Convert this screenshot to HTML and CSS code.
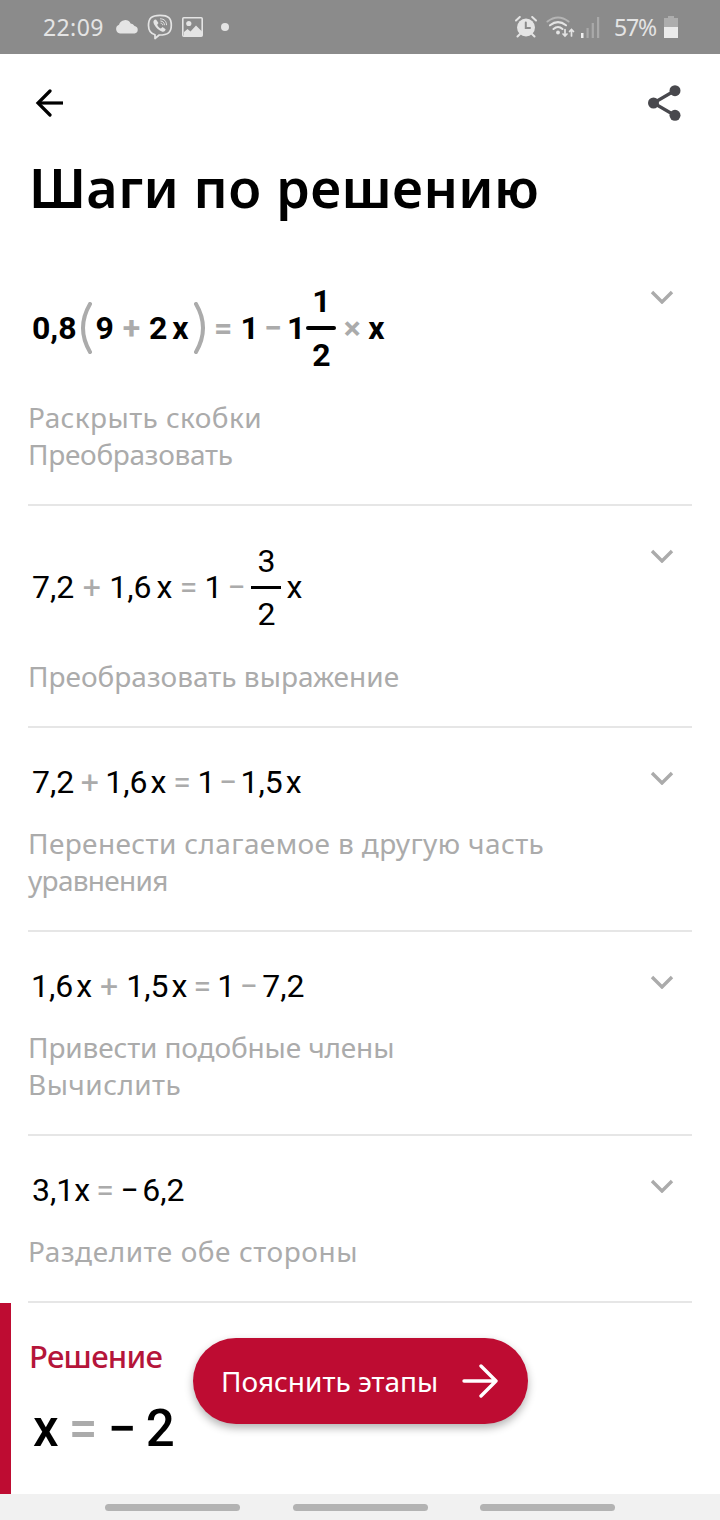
FILE: index.html
```html
<!DOCTYPE html>
<html lang="ru">
<head>
    <meta charset="UTF-8">
    <meta name="viewport" content="width=device-width, initial-scale=1.0">
    <title>Шаги по решению</title>
    <link rel="stylesheet" href="styles.css">
</head>
<body>
    <div class="status">
        <span class="clock">22:09</span>
        <svg class="cloud" width="24" height="14" viewBox="0 0 24 14"><path d="M5 13.5A4.6 4.6 0 0 1 4 4.7 6.3 6.3 0 0 1 15.6 3.4 4.8 4.8 0 0 1 19.5 6 3.8 3.8 0 0 1 19.6 13.5Z" fill="#e4e4e4"/></svg>
        <svg class="viber" width="26" height="26" viewBox="0 0 26 26" fill="none" stroke="#e4e4e4" stroke-linecap="round">
            <path d="M8 24.5V20.8C3.5 19.5 1.5 17 1.5 11.5 1.5 4 4.5 1.3 13 1.3S24.3 4 24.3 11.2 21 21 12.2 21Z" stroke-width="1.7" stroke-linejoin="round"/>
            <path d="M7.5 5.8C6 7 6.2 8.5 7.2 10.4c2 3.7 4.6 5.8 8.2 7.3 1.6.6 3.3-1.5 3.2-2.5L15.6 13l-1.7 1.5c-1.7-.6-3.1-2-3.7-3.8L11.5 9 9 5.6Z" fill="#e4e4e4" stroke="none"/>
            <path d="M13.5 4.8c3.8 0 6 2.5 6 6M13.8 7c2.2.2 3.6 1.7 3.6 3.8M14 9.2c1 .1 1.5.6 1.6 1.6" stroke-width="1"/>
        </svg>
        <svg class="photo" width="21" height="20" viewBox="0 0 21 20"><rect x=".8" y=".8" width="19.4" height="18.4" rx="1" fill="none" stroke="#e4e4e4" stroke-width="1.6"/><circle cx="6.8" cy="6.5" r="2.6" fill="#e4e4e4"/><path d="M2 15l3.5-3 3 2.5L14 8.5l6 6V19H2Z" fill="#e4e4e4"/></svg>
        <span class="dot"></span>
        <div class="status-right">
            <svg width="22" height="22" viewBox="0 0 22 22" stroke="#e4e4e4" stroke-linecap="round">
                <circle cx="11" cy="11.5" r="9" fill="#e4e4e4" stroke="none"/>
                <path d="M1 4.5 4.8 1M21 4.5 17.2 1M5 18l-2.5 2.5M17 18l2.5 2.5" stroke-width="2" fill="none"/>
                <path d="M10.8 6.5V12H15" stroke="#8b8b8b" stroke-width="2" fill="none"/>
            </svg>
            <svg class="wifi" width="29" height="22" viewBox="0 0 29 22" fill="none" stroke="#e4e4e4" stroke-width="2.1" stroke-linecap="round">
                <path d="M1.5 5.5Q12 -2.5 22.5 5.5" stroke="#b4b4b4"/>
                <path d="M4 9.3Q12 3 20 9.3M7.5 13Q12 9 16.5 13"/>
                <circle cx="12" cy="16.5" r="1.9" fill="#e4e4e4" stroke="none"/>
                <path d="M19 13.5v6.5M17 18l2 2 2-2M25.5 20v-6.5M23.5 15.5l2-2 2 2" stroke-width="1.7"/>
            </svg>
            <svg class="signal" width="19" height="21" viewBox="0 0 19 21"><path d="M0 16h2.5v5H0Z" fill="#f0f0f0"/><path d="M5.5 11h2.2v10H5.5ZM10.7 6h2.2v15h-2.2ZM16 0h2.2v21H16Z" fill="#a9a9a9"/></svg>
            <span class="percent">57%</span>
            <svg class="battery" width="14" height="22" viewBox="0 0 14 22"><path d="M4 0h6v2h4v9H0V2h4Z" fill="#adadad"/><path d="M0 11h14v11H0Z" fill="#ebebeb"/></svg>
        </div>
    </div>

    <div class="toolbar">
        <svg width="30" height="28" viewBox="0 0 30 28" fill="none" stroke="#000" stroke-width="3.2" stroke-linecap="round"><path d="M15 2 3 14l12 12"/><path d="M3 14h25" stroke-linecap="butt"/></svg>
        <svg width="33" height="36" viewBox="0 0 33 36" fill="#48484d"><path d="M27 5.5 5.5 18 27 30.5" fill="none" stroke="#48484d" stroke-width="3.2"/><circle cx="5.5" cy="18" r="5.5"/><circle cx="27" cy="5.7" r="5.5"/><circle cx="27" cy="30.3" r="5.5"/></svg>
    </div>
    <h1 class="title">Шаги по решению</h1>

    <div class="steps">
        <div class="step">
            <div class="step-body">
                <div class="eq eq-tall eq-bold">
                    <span>0,8</span>
                    <svg class="paren" width="12" height="52" viewBox="0 0 12 52"><path d="M10 2Q-4 26 10 50"/></svg>
                    <span class="nine">9</span><span class="op w35">+</span><span>2</span><span class="var">x</span>
                    <svg class="paren close" width="12" height="52" viewBox="0 0 12 52"><path d="M2 2Q16 26 2 50"/></svg>
                    <span class="op w35">=</span><span>1</span><span class="op w28">−</span><span>1</span>
                    <span class="frac"><span>1</span><span class="bar"></span><span>2</span></span>
                    <span class="op w32">×</span><span>x</span>
                </div>
                <p class="note n1">Раскрыть скобки<br><span class="n1b">Преобразовать</span></p>
            </div>
            <svg class="chevron" width="24" height="14" viewBox="0 0 24 14"><path d="M2 2l10 10L22 2"/></svg>
        </div>

        <div class="step">
            <div class="step-body">
                <div class="eq eq-tall">
                    <span>7,2</span><span class="op w35">+</span><span>1,6</span><span class="var">x</span><span class="op w32">=</span><span>1</span><span class="op w28">−</span>
                    <span class="frac"><span>3</span><span class="bar"></span><span>2</span></span>
                    <span class="var">x</span>
                </div>
                <p class="note n2">Преобразовать выражение</p>
            </div>
            <svg class="chevron" width="24" height="14" viewBox="0 0 24 14"><path d="M2 2l10 10L22 2"/></svg>
        </div>

        <div class="step">
            <div class="step-body">
                <div class="eq eq-short">
                    <span>7,2</span><span class="op w31">+</span><span>1,6</span><span class="var">x</span><span class="op w31">=</span><span>1</span><span class="op w25">−</span><span>1,5</span><span class="var">x</span>
                </div>
                <p class="note n3">Перенести слагаемое в другую часть<br><span class="n3b">уравнения</span></p>
            </div>
            <svg class="chevron" width="24" height="14" viewBox="0 0 24 14"><path d="M2 2l10 10L22 2"/></svg>
        </div>

        <div class="step">
            <div class="step-body">
                <div class="eq eq-short eq-one">
                    <span>1,6</span><span class="var">x</span><span class="op w34">+</span><span>1,5</span><span class="var">x</span><span class="op w30">=</span><span>1</span><span class="op w27">−</span><span>7,2</span>
                </div>
                <p class="note n4">Привести подобные члены<br><span class="n4b">Вычислить</span></p>
            </div>
            <svg class="chevron" width="24" height="14" viewBox="0 0 24 14"><path d="M2 2l10 10L22 2"/></svg>
        </div>

        <div class="step">
            <div class="step-body">
                <div class="eq">
                    <span>3,1x</span><span class="op w30">=</span><span class="neg">−</span><span>6,2</span>
                </div>
                <p class="note n5">Разделите обе стороны</p>
            </div>
            <svg class="chevron" width="24" height="14" viewBox="0 0 24 14"><path d="M2 2l10 10L22 2"/></svg>
        </div>
    </div>

    <div class="solution">
        <div class="solution-title">Решение</div>
        <div class="answer"><span>x</span><span class="op">=</span><span class="neg">−</span><span>2</span></div>
    </div>

    <!-- плавающая кнопка -->
    <button class="explain" type="button">
        <span>Пояснить этапы</span>
        <svg width="36" height="34" viewBox="0 0 36 34" fill="none" stroke="#fff" stroke-width="3.4" stroke-linecap="round" stroke-linejoin="round"><path d="M2 17h32M19 2l15 15-15 15"/></svg>
    </button>

    <div class="navbar"><span></span><span></span><span></span></div>
</body>
</html>
```
FILE: styles.css
```css
body {
    margin: 0;
    width: 720px;
    height: 1520px;
    display: flex;
    flex-direction: column;
    position: relative;
    overflow: hidden;
    background-color: #fff;
    font-family: "Noto Sans", sans-serif;
    color: #000;
}
svg {
    display: block;
    flex: none;
}

/* строка состояния */
.status {
    height: 54px;
    box-sizing: border-box;
    padding: 0 42px 0 43px;
    display: flex;
    align-items: center;
    background-color: #8b8b8b;
    color: #e4e4e4;
    font-size: 23px;
}
.clock {
    width: 72px;
    letter-spacing: 0.4px;
}
.viber {
    margin-left: 8px;
}
.photo {
    margin-left: 9px;
}
.dot {
    width: 8px;
    height: 8px;
    margin-left: 18px;
    border-radius: 50%;
    background-color: #e4e4e4;
}
.status-right {
    margin-left: auto;
    display: flex;
    align-items: center;
}
.wifi {
    margin-left: 9px;
}
.signal {
    margin-left: 6px;
}
.percent {
    width: 50px;
    margin-left: 14px;
    letter-spacing: -1.2px;
}

.toolbar {
    height: 98px;
    padding: 0 39px 0 35px;
    display: flex;
    align-items: center;
    justify-content: space-between;
}
.title {
    margin: 0 0 0 29px;
    height: 95px;
    line-height: 70px;
    font-size: 54px;
    font-weight: 600;
    letter-spacing: 0.4px;
    white-space: nowrap;
}

/* шаги */
.steps {
    margin: 0 28px;
}
.step {
    display: flex;
    justify-content: space-between;
    padding: 32px 18px 31px 0;
    border-bottom: 2px solid #e6e6e6;
}
.chevron {
    margin-top: 11px;
    fill: none;
    stroke: #ababab;
    stroke-width: 3.4;
}
.eq {
    height: 43px;
    padding-left: 4px;
    display: flex;
    align-items: center;
    font: 32px/40px Roboto, sans-serif;
    white-space: nowrap;
}
.eq-one {
    padding-left: 3px;
}
.eq-tall {
    height: 98px;
}
.eq-bold {
    font-weight: 700;
}
.op {
    text-align: center;
    color: #ababab;
}
.w25 { width: 25px; }
.w27 { width: 27px; }
.w28 { width: 28px; }
.w30 { width: 30px; }
.w31 { width: 31px; }
.w32 { width: 32px; }
.w34 { width: 34px; }
.w35 { width: 35px; }
.var {
    margin-left: 5px;
}
.eq-short .var {
    margin-left: 3px;
}
.neg {
    width: 22px;
    text-align: left;
}
.paren {
    margin-left: 3px;
    fill: none;
    stroke: #ababab;
    stroke-width: 4;
    stroke-linecap: round;
}
.close {
    margin-left: 5px;
}
.nine {
    margin-left: 4px;
}
.frac {
    width: 30px;
    margin-left: 1px;
    display: flex;
    flex-direction: column;
    align-items: center;
    gap: 5px;
}
.bar {
    width: 100%;
    height: 3px;
    background-color: #000;
}
.eq-bold .bar {
    height: 4px;
    border-radius: 2px;
}
.note {
    margin: 22px 0 0;
    font-size: 28px;
    line-height: 37px;
    color: #ababab;
    white-space: nowrap;
}
.n1 { letter-spacing: 0.4px; }
.n1b { letter-spacing: -0.3px; }
.n3 { letter-spacing: 0.38px; }
.n3b { letter-spacing: -0.7px; }
.n4 { letter-spacing: -0.13px; }
.n4b { letter-spacing: 0.45px; }
.n5 { letter-spacing: 0.55px; }

/* решение */
.solution {
    flex: 1;
    padding: 30px 0 0 18px;
    border-left: 11px solid #be0c32;
}
.solution-title {
    font-size: 31px;
    line-height: 46px;
    font-weight: 500;
    letter-spacing: -0.7px;
    color: #b5153a;
}
.answer {
    margin-left: 4px;
    display: flex;
    font: 500 51px/100px Roboto, sans-serif;
}
.answer .op {
    width: 49px;
}
.answer .neg {
    width: 38px;
}
.explain {
    position: absolute;
    left: 193px;
    top: 1338px;
    width: 335px;
    height: 86px;
    padding: 0 30px 0 28px;
    display: flex;
    align-items: center;
    justify-content: space-between;
    border: none;
    border-radius: 43px;
    background-color: #be0c32;
    box-shadow: 0 4px 9px rgba(0, 0, 0, 0.3);
    color: #fff;
    font: 28px "Noto Sans", sans-serif;
    white-space: nowrap;
}

.navbar {
    height: 26px;
    padding-left: 105px;
    display: flex;
    align-items: center;
    gap: 52.5px;
    background-color: #f1f1f1;
}
.navbar span {
    width: 135px;
    height: 7px;
    border-radius: 4px;
    background-color: #b3b3b3;
}
```
